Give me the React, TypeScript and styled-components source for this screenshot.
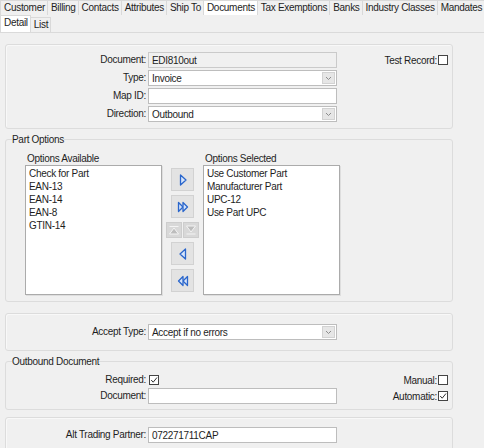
import React from 'react';
import styled, { createGlobalStyle } from 'styled-components';

const GlobalStyle = createGlobalStyle`
  html, body {
    margin: 0;
    padding: 0;
    background: #f0f0f0;
  }
  body {
    font-family: "Liberation Sans", Arial, sans-serif;
    font-size: 10px;
    letter-spacing: -0.3px;
    color: #1e1e1e;
  }
`;

const mainTabs = [
  'Customer',
  'Billing',
  'Contacts',
  'Attributes',
  'Ship To',
  'Documents',
  'Tax Exemptions',
  'Banks',
  'Industry Classes',
  'Mandates',
];

const available = ['Check for Part', 'EAN-13', 'EAN-14', 'EAN-8', 'GTIN-14'];
const selected = ['Use Customer Part', 'Manufacturer Part', 'UPC-12', 'Use Part UPC'];

const Window = styled.div`
  width: 484px;
  height: 448px;
  overflow: hidden;
  background: #f0f0f0;
`;

const TabStrip = styled.div<{ $height: number }>`
  display: flex;
  align-items: flex-end;
  height: ${p => p.$height}px;
`;

const Tab = styled.div<{ $active?: boolean; $tall?: boolean }>`
  box-sizing: border-box;
  height: ${p => (p.$tall ? 17 : 15)}px;
  line-height: 14px;
  padding: 0 2px 0 3px;
  border: 1px solid #d9d9d9;
  border-bottom: none;
  margin-right: -1px;
  white-space: nowrap;
  background: ${p => (p.$active ? '#ffffff' : '#f0f0f0')};
`;

const Content = styled.div`
  border-top: 1px solid #dadada;
  padding: 11px 31px 0 5px;
`;

const Panel = styled.div<{ $top?: number; $pad: string }>`
  margin-top: ${p => p.$top ?? 0}px;
  border: 1px solid #dcdcdc;
  border-radius: 3px;
  box-shadow: inset 1px 1px 0 #f8f8f8;
  padding: ${p => p.$pad};
  display: grid;
  grid-template-columns: 140px 189px 1fr auto;
  column-gap: 2px;
  row-gap: 2px;
  align-items: center;
`;

const Group = styled.fieldset<{ $top: number }>`
  margin: ${p => p.$top}px 0 0;
  padding: 0;
  min-width: 0;
  border: 1px solid #dcdcdc;
  border-radius: 3px;
`;

const Legend = styled.legend`
  margin-left: 6px;
  padding: 0;
  line-height: 11px;
`;

const FormGrid = styled.div<{ $pad: string }>`
  padding: ${p => p.$pad};
  display: grid;
  grid-template-columns: 140px 189px 1fr auto;
  column-gap: 2px;
  row-gap: 2px;
  align-items: center;
`;

const Label = styled.div`
  grid-column: 1;
  text-align: right;
  white-space: nowrap;
  line-height: 12px;
`;

const FieldBox = styled.div<{ $readOnly?: boolean }>`
  grid-column: 2;
  box-sizing: border-box;
  height: 16px;
  display: flex;
  align-items: center;
  padding-left: 3px;
  border: 1px solid ${p => (p.$readOnly ? '#cacaca' : '#bdbdbd')};
  background: ${p => (p.$readOnly ? '#f0f0f0' : '#ffffff')};
  white-space: nowrap;
`;

const DropButton = styled.span`
  margin-left: auto;
  margin-right: 1px;
  box-sizing: border-box;
  width: 13px;
  height: 12px;
  display: flex;
  align-items: center;
  justify-content: center;
  background: #e6e6e6;
  border: 1px solid #d2d2d2;
`;

const SideCell = styled.div<{ $row: number }>`
  grid-column: 4;
  grid-row: ${p => p.$row};
  display: flex;
  align-items: center;
  justify-content: flex-end;
  gap: 1px;
  white-space: nowrap;
`;

const InlineCell = styled.div`
  grid-column: 2;
  display: flex;
  align-items: center;
  padding-left: 1px;
`;

const Box = styled.span`
  box-sizing: border-box;
  width: 10px;
  height: 10px;
  border: 1px solid #444;
  background: #ffffff;
  display: inline-flex;
  align-items: center;
  justify-content: center;
`;

const PickerGrid = styled.div`
  padding: 8px 0 6px 19px;
  display: grid;
  grid-template-columns: 137px 41px 137px;
  grid-template-rows: 12px 130px;
`;

const ListCaption = styled.div<{ $col: number }>`
  grid-column: ${p => p.$col};
  grid-row: 1;
  padding-left: 2px;
  line-height: 11px;
  white-space: nowrap;
`;

const ListBox = styled.div<{ $col: number }>`
  grid-column: ${p => p.$col};
  grid-row: 2;
  box-sizing: border-box;
  background: #ffffff;
  border: 1px solid #ababab;
  box-shadow: 1px 1px 0 #dedede;
  padding: 1px 0 0 3px;
`;

const ListItem = styled.div`
  line-height: 13px;
  white-space: nowrap;
`;

const MoveColumn = styled.div`
  grid-column: 2;
  grid-row: 2;
  display: flex;
  flex-direction: column;
  align-items: center;
  padding-top: 3px;
  gap: 4px;
`;

const MoveButton = styled.div`
  box-sizing: border-box;
  width: 23px;
  height: 23px;
  background: #e3e3e3;
  border: 1px solid #d2d2d2;
  display: flex;
  align-items: center;
  justify-content: center;
`;

const SmallPair = styled.div`
  display: flex;
  gap: 1px;
`;

const SmallButton = styled.div`
  box-sizing: border-box;
  width: 16px;
  height: 16px;
  background: #d8d8d8;
  border: 1px solid #cdcdcd;
  display: flex;
  align-items: center;
  justify-content: center;
`;

const Chevron = () => (
  <svg width="7" height="5" viewBox="0 0 7 5">
    <path d="M1 1 L3.5 3.5 L6 1" fill="none" stroke="#8c8c8c" strokeWidth="1" />
  </svg>
);

const Check = ({ checked }: { checked?: boolean }) => (
  <Box>
    {checked && (
      <svg width="8" height="8" viewBox="0 0 8 8">
        <path d="M1.2 4 L3.2 6.2 L7 1.5" fill="none" stroke="#333" strokeWidth="1" />
      </svg>
    )}
  </Box>
);

const blue = { stroke: '#2a66cc', fill: '#d6e4fa', strokeWidth: 1.3, strokeLinejoin: 'round' as const };

const Arrow = ({ dir, double }: { dir: 'right' | 'left'; double?: boolean }) => (
  <svg width="12" height="12" viewBox="0 0 12 12">
    <g transform={dir === 'left' ? 'translate(12 0) scale(-1 1)' : undefined}>
      {double ? (
        <>
          <polygon points="1.5,1.5 6,6 1.5,10.5" {...blue} />
          <polygon points="6,1.5 10.5,6 6,10.5" {...blue} />
        </>
      ) : (
        <polygon points="3.5,1 9,6 3.5,11" {...blue} />
      )}
    </g>
  </svg>
);

const Shift = ({ up }: { up?: boolean }) => (
  <svg width="12" height="12" viewBox="0 0 12 12">
    {up ? (
      <>
        <polygon points="1.5,10 6,4 10.5,10" fill="#bdbdbd" stroke="#f4f4f4" strokeWidth="1" />
        <rect x="1.5" y="2" width="9" height="1" fill="#f4f4f4" />
      </>
    ) : (
      <>
        <polygon points="1.5,2 10.5,2 6,8" fill="#bdbdbd" stroke="#f4f4f4" strokeWidth="1" />
        <rect x="1.5" y="9.5" width="9" height="1" fill="#f4f4f4" />
      </>
    )}
  </svg>
);

const Select = ({ value }: { value: string }) => (
  <FieldBox>
    {value}
    <DropButton>
      <Chevron />
    </DropButton>
  </FieldBox>
);

export default function App() {
  return (
    <>
      <GlobalStyle />
      <Window>
        <TabStrip $height={15}>
          {mainTabs.map(t => (
            <Tab key={t} $active={t === 'Documents'}>
              {t}
            </Tab>
          ))}
        </TabStrip>
        <TabStrip $height={17}>
          <Tab $active $tall>
            Detail
          </Tab>
          <Tab>List</Tab>
        </TabStrip>

        <Content>
          <Panel $pad="7px 4px 6px 0">
            <Label>Document:</Label>
            <FieldBox $readOnly>EDI810out</FieldBox>
            <SideCell $row={1}>
              Test Record:
              <Check />
            </SideCell>
            <Label>Type:</Label>
            <Select value="Invoice" />
            <Label>Map ID:</Label>
            <FieldBox />
            <Label>Direction:</Label>
            <Select value="Outbound" />
          </Panel>

          <Group $top={5}>
            <Legend>Part Options</Legend>
            <PickerGrid>
              <ListCaption $col={1}>Options Available</ListCaption>
              <ListCaption $col={3}>Options Selected</ListCaption>
              <ListBox $col={1}>
                {available.map(o => (
                  <ListItem key={o}>{o}</ListItem>
                ))}
              </ListBox>
              <MoveColumn>
                <MoveButton>
                  <Arrow dir="right" />
                </MoveButton>
                <MoveButton>
                  <Arrow dir="right" double />
                </MoveButton>
                <SmallPair>
                  <SmallButton>
                    <Shift up />
                  </SmallButton>
                  <SmallButton>
                    <Shift />
                  </SmallButton>
                </SmallPair>
                <MoveButton>
                  <Arrow dir="left" />
                </MoveButton>
                <MoveButton>
                  <Arrow dir="left" double />
                </MoveButton>
              </MoveColumn>
              <ListBox $col={3}>
                {selected.map(o => (
                  <ListItem key={o}>{o}</ListItem>
                ))}
              </ListBox>
            </PickerGrid>
          </Group>

          <Panel $top={11} $pad="10px 4px 10px 0">
            <Label>Accept Type:</Label>
            <Select value="Accept if no errors" />
          </Panel>

          <Group $top={5}>
            <Legend>Outbound Document</Legend>
            <FormGrid $pad="7px 4px 5px 0">
              <Label>Required:</Label>
              <InlineCell>
                <Check checked />
              </InlineCell>
              <SideCell $row={1}>
                Manual:
                <Check />
              </SideCell>
              <Label>Document:</Label>
              <FieldBox />
              <SideCell $row={2}>
                Automatic:
                <Check checked />
              </SideCell>
            </FormGrid>
          </Group>

          <Panel $top={7} $pad="9px 4px 10px 0">
            <Label>Alt Trading Partner:</Label>
            <FieldBox>072271711CAP</FieldBox>
          </Panel>
        </Content>
      </Window>
    </>
  );
}
